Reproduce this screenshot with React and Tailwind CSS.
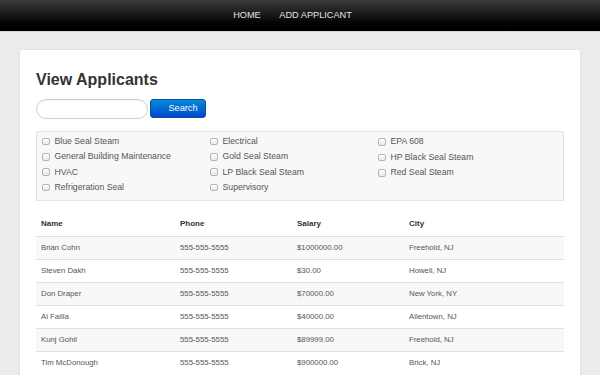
import React from 'react';

const columns = [
  ['Blue Seal Steam', 'General Building Maintenance', 'HVAC', 'Refrigeration Seal'],
  ['Electrical', 'Gold Seal Steam', 'LP Black Seal Steam', 'Supervisory'],
  ['EPA 608', 'HP Black Seal Steam', 'Red Seal Steam'],
];

const applicants = [
  { name: 'Brian Cohn', phone: '555-555-5555', salary: '$1000000.00', city: 'Freehold, NJ' },
  { name: 'Steven Dakh', phone: '555-555-5555', salary: '$30.00', city: 'Howell, NJ' },
  { name: 'Don Draper', phone: '555-555-5555', salary: '$70000.00', city: 'New York, NY' },
  { name: 'Al Failla', phone: '555-555-5555', salary: '$40000.00', city: 'Allentown, NJ' },
  { name: 'Kunj Gohil', phone: '555-555-5555', salary: '$89999.00', city: 'Freehold, NJ' },
  { name: 'Tim McDonough', phone: '555-555-5555', salary: '$900000.00', city: 'Brick, NJ' },
];

function Check({ label }) {
  return (
    <label className="flex items-center h-[15.5px] gap-[5px]">
      <span className="w-[7.5px] h-[7.5px] rounded-[2px] border border-[#b5b5b5] bg-gradient-to-b from-white to-[#e8e8e8]" />
      <span className="text-[8.7px] text-[#555]">{label}</span>
    </label>
  );
}

export default function App() {
  return (
    <div className="min-h-screen bg-[#ececec] font-['Liberation_Sans',Arial,sans-serif]">
      <nav className="h-[32px] bg-gradient-to-b from-[#3c3c3c] via-[#161616] to-[#000] border-b border-[#d5d5d5] flex justify-center items-center pr-[15px]">
        <a className="px-[9.3px] text-[9.2px] text-[#e2e2e2]">HOME</a>
        <a className="px-[9.3px] text-[9.2px] text-[#e2e2e2]">ADD APPLICANT</a>
      </nav>

      <div className="mx-[20px] mt-[18px] bg-white px-[16px] pt-[20px] pb-[30px] shadow-[0_0_2px_rgba(0,0,0,0.12)]">
        <h1 className="text-[16px] leading-[20px] font-bold text-[#333]">View Applicants</h1>

        <div className="flex mt-[9px]">
          <input className="w-[112px] h-[20px] rounded-full border border-[#d0d0d0] outline-none shadow-[inset_0_1px_1px_rgba(0,0,0,0.05)]" />
          <button className="ml-[2px] w-[56px] h-[19px] rounded-[3px] bg-gradient-to-b from-[#0a8ad8] to-[#0046c8] border border-[#0a4db5] text-white text-[9.2px] pl-[10px]">
            Search
          </button>
        </div>

        <div className="mt-[12px] border border-[#e3e3e3] bg-[#f8f8f8] flex pl-[5px] pt-[2px] pb-[5px] h-[70px]">
          {columns.map((col, i) => (
            <div key={i} className="w-[168px] flex flex-col">
              {col.map((l) => (
                <Check key={l} label={l} />
              ))}
            </div>
          ))}
        </div>

        <table className="mt-[11px] w-full border-collapse text-left">
          <thead>
            <tr className="h-[24px] text-[8px] font-bold text-[#333]">
              <th className="w-[139px] pl-[5px] font-bold">Name</th>
              <th className="w-[117px] pl-[5px] font-bold">Phone</th>
              <th className="w-[112px] pl-[5px] font-bold">Salary</th>
              <th className="pl-[5px] font-bold">City</th>
            </tr>
          </thead>
          <tbody>
            {applicants.map((a, i) => (
              <tr key={a.name} className={`h-[23px] border-t border-[#e0e0e0] text-[7.8px] text-[#555] ${i % 2 === 0 ? 'bg-[#f8f8f8]' : 'bg-white'}`}>
                <td className="pl-[5px]">{a.name}</td>
                <td className="pl-[5px]">{a.phone}</td>
                <td className="pl-[5px]">{a.salary}</td>
                <td className="pl-[5px]">{a.city}</td>
              </tr>
            ))}
          </tbody>
        </table>
      </div>
    </div>
  );
}
